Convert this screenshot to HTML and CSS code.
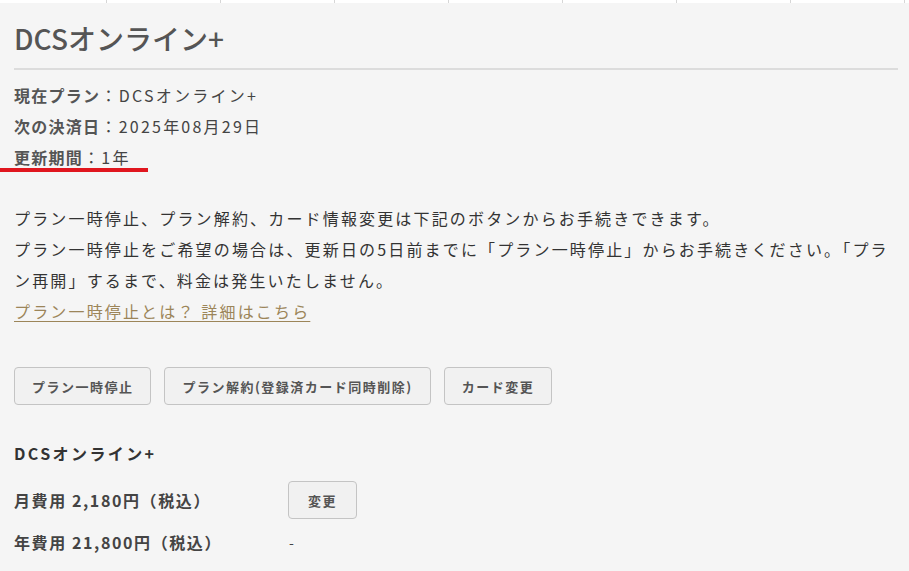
FILE: index.html
```html
<!DOCTYPE html>
<html lang="ja">
<head>
<meta charset="utf-8">
<link rel="stylesheet" href="styles.css">
</head>
<body>
<div class="tabs">
  <span class="tab"></span><span class="tab"></span><span class="tab"></span><span class="tab"></span>
  <span class="tab"></span><span class="tab"></span><span class="tab"></span><span class="tab"></span>
</div>
<main class="page">
  <h1 class="title">DCSオンライン+</h1>
  <div class="info">
    <div class="info-row"><span class="label">現在プラン</span>：DCSオンライン+</div>
    <div class="info-row"><span class="label">次の決済日</span>：2025年08月29日</div>
    <div class="info-row marked"><span class="label">更新期間</span>：1年</div>
  </div>
  <div class="notice">
    <p>プラン一時停止、プラン解約、カード情報変更は下記のボタンからお手続きできます。</p>
    <p>プラン一時停止をご希望の場合は、更新日の5日前までに「プラン一時停止」からお手続きください。「プラン再開」するまで、料金は発生いたしません。</p>
    <p><a class="link" href="#">プラン一時停止とは？ 詳細はこちら</a></p>
  </div>
  <div class="actions">
    <button class="btn">プラン一時停止</button>
    <button class="btn">プラン解約(登録済カード同時削除)</button>
    <button class="btn">カード変更</button>
  </div>
  <h2 class="subtitle">DCSオンライン+</h2>
  <div class="fees">
    <div class="fee-name">月費用 2,180円（税込）</div>
    <div class="fee-act"><button class="btn btn-small">変更</button></div>
    <div class="fee-name">年費用 21,800円（税込）</div>
    <div class="fee-act dash">-</div>
  </div>
</main>
</body>
</html>
```
FILE: styles.css
```css
* { box-sizing: border-box; }
html, body {
  margin: 0;
  padding: 0;
  background: #f5f5f5;
  font-family: "Noto Sans CJK JP", "Noto Sans", sans-serif;
  color: #333;
}
.tabs {
  display: flex;
  height: 3px;
  background: #fff;
}
.tab {
  width: 114px;
  flex: none;
  border-right: 1px solid #d6d6d6;
}
.tab:first-child { width: 107px; }
.page {
  padding: 0 11px 0 14px;
}
.title {
  margin: 0;
  padding-top: 15px;
  padding-bottom: 10px;
  font-size: 28px;
  line-height: 40px;
  font-weight: 500;
  color: #555;
  border-bottom: 2px solid #dcdcdc;
}
.info {
  padding-top: 10px;
}
.info-row {
  font-size: 16px;
  line-height: 31px;
  letter-spacing: 0.14em;
  color: #444;
}
.label { font-weight: 700; color: #555; letter-spacing: 0.08em; }
.marked { position: relative; }
.marked::after {
  content: "";
  position: absolute;
  left: -14px;
  top: 26px;
  width: 148px;
  height: 4px;
  background: #e0161e;
}
.notice {
  margin-top: 30px;
}
.notice p {
  margin: 0;
  font-size: 16px;
  line-height: 31px;
  letter-spacing: 0.135em;
  color: #333;
}
.link {
  color: #9c8559;
  text-decoration: underline;
  text-underline-offset: 3px;
}
.actions {
  display: flex;
  gap: 13px;
  margin-top: 40px;
}
.btn {
  font-family: "Noto Sans CJK JP", "Noto Sans", sans-serif;
  font-size: 13px;
  font-weight: 700;
  letter-spacing: 0.115em;
  color: #555;
  background: #f1f1f1;
  border: 1px solid #c4c4c4;
  border-radius: 4px;
  height: 38px;
  padding: 0 17px;
}
.subtitle {
  margin: 33px 0 0;
  font-size: 16px;
  line-height: 31px;
  font-weight: 700;
  letter-spacing: 0.15em;
  color: #333;
}
.fees {
  display: grid;
  grid-template-columns: 274px auto;
  grid-auto-rows: 42px;
  align-items: center;
  margin-top: 10px;
}
.fee-name {
  font-size: 16px;
  font-weight: 700;
  letter-spacing: 0.1em;
  color: #444;
}
.btn-small {
  width: 69px;
  padding: 0;
}
.dash {
  font-size: 14px;
  color: #444;
  padding-left: 1px;
}
```
